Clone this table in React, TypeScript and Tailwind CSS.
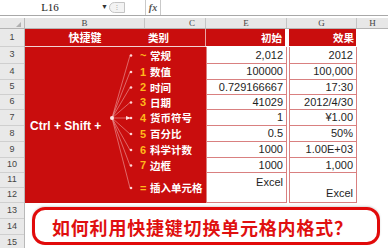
import React from "react";

const sans = "font-['Liberation_Sans','Noto_Sans_CJK_SC',sans-serif]";
const cjk = "font-['Noto_Sans_CJK_SC','Liberation_Sans',sans-serif]";

const rowHeads: [string, number][] = [
    ["1", 18], ["3", 17], ["4", 16], ["5", 15], ["6", 15], ["7", 16], ["8", 16],
    ["9", 16], ["10", 15], ["11", 15], ["12", 15], ["13", 16], ["14", 16], ["15", 16],
];

const items = [
    {k: "~", t: "常规", h: 17},
    {k: "1", t: "数值", h: 16},
    {k: "2", t: "时间", h: 15},
    {k: "3", t: "日期", h: 15},
    {k: "4", t: "货币符号", h: 16},
    {k: "5", t: "百分比", h: 16},
    {k: "6", t: "科学计数", h: 16},
    {k: "7", t: "边框", h: 15},
    {k: "=", t: "插入单元格", h: 30},
];

const rowH = ["h-[17px]", "h-[16px]", "h-[15px]", "h-[15px]", "h-[16px]", "h-[16px]", "h-[16px]", "h-[15px]", "h-[30px]"];

const before = ["2,012", "100000", "0.729166667", "41029", "1", "0.5", "1000", "1000"];
const after = ["2012", "100,000", "17:30", "2012/4/30", "¥1.00", "50%", "1.00E+03", "1,000"];

function Fan() {
    let y = 0;
    const ends = items.map((it) => {
        const c = y + it.h / 2;
        y += it.h;
        return c;
    });
    return (
        <svg className="absolute left-0 top-0 pointer-events-none" width="181" height="156" viewBox="0 0 181 156">
            {ends.map((c, i) => (
                <line key={i} x1="87" y1="71" x2={i === 4 ? 104 : 105} y2={c} stroke="#eea4a4" strokeWidth="0.6"/>
            ))}
            {ends.map((c, i) => (
                <circle key={"d" + i} cx="106" cy={c} r="1.3" fill="#ffd6d6"/>
            ))}
            <path d="M101 69 L106 71 L101 73 Z" fill="#ffe0e0"/>
            <circle cx="87" cy="71" r="2" fill="#ffe6e6"/>
        </svg>
    );
}

export default function App() {
    return (
        <div className={`w-[388px] h-[248px] overflow-hidden bg-white flex flex-col ${sans}`}>
            {/* formula bar */}
            <div className="h-[16px] flex items-stretch border-b border-[#a8a8a8] shrink-0">
                <div className="w-[100px] flex items-center justify-center text-[11px] text-[#222] font-['Liberation_Serif',serif]">L16</div>
                <div className="w-[9px] flex items-center justify-center text-[7px] text-[#333]">▼</div>
                <div className="w-[36px] flex items-center">
                    <div className="w-[16px] h-[11px] rounded-l-full border border-[#c4c4c4] bg-[#f3f3f3] flex items-center justify-center text-[7px] text-[#999] leading-none">⁝</div>
                </div>
                <div className="w-[16px] border-x border-[#c9c9c9] flex items-center justify-center text-[10px] italic font-bold text-[#555] font-['Liberation_Serif',serif]">fx</div>
                <div className="flex-1"/>
            </div>
            <div className="h-[2px] shrink-0"/>

            {/* column headers */}
            <div className="h-[11px] flex shrink-0 bg-[#e7e7e7] border-b border-[#b4b4b4] text-[9px] text-[#444] leading-none font-['Liberation_Serif',serif]">
                <div className="w-[25px] border-r border-[#b9b9b9] relative">
                    <div className="absolute right-[3px] bottom-[1px] w-0 h-0 border-l-[5px] border-l-transparent border-b-[5px] border-b-[#b0b0b0]"/>
                </div>
                <div className="w-[120px] border-r border-[#c4c4c4] flex items-center justify-center">B</div>
                <div className="w-[61px] border-r border-[#c4c4c4] flex items-center justify-end pr-[10px]">C</div>
                <div className="w-[81px] border-r border-[#c4c4c4] flex items-center justify-center">E</div>
                <div className="w-[70px] border-r border-[#c4c4c4] flex items-center justify-center">G</div>
                <div className="flex-1 flex items-center justify-center">H</div>
            </div>

            <div className="flex flex-1 min-h-0">
                {/* row headers */}
                <div className="w-[25px] shrink-0 flex flex-col bg-[#e9e9e9] border-r border-[#b9b9b9]">
                    {rowHeads.map(([n, h]) => (
                        <div key={n} style={{height: h}}
                             className="shrink-0 border-b border-[#cfcfcf] flex items-center justify-center text-[9px] text-[#444]">
                            {n}
                        </div>
                    ))}
                </div>

                <div className="flex-1 flex flex-col">
                    {/* row 1 */}
                    <div className={`h-[17px] flex shrink-0 text-white font-bold text-[11px] ${cjk}`}>
                        <div className="w-[180px] bg-[#c90d0d] flex items-center">
                            <div className="w-[120px] text-center">快捷键</div>
                            <div className="pl-[3px] text-[10.5px]">类别</div>
                        </div>
                        <div className="w-[1px] bg-[#e8a5a5]"/>
                        <div className="w-[79px] bg-[#c90d0d] flex items-center justify-end pr-[3px] text-[10.5px]">初始</div>
                        <div className="w-[4px]"/>
                        <div className="w-[67px] bg-[#c90d0d] flex items-center justify-end pr-[2px] text-[10.5px]">效果</div>
                    </div>
                    <div className="h-[1px] flex shrink-0">
                        <div className="w-[181px] bg-[#f2d2d2]"/>
                    </div>

                    {/* rows 3-12 */}
                    <div className="h-[156px] flex shrink-0">
                        <div className="w-[181px] bg-[#c90d0d] relative flex">
                            <Fan/>
                            <div className="w-[115px] flex items-center pl-[5px] pt-[1px]">
                                <span className="text-white font-bold text-[12px] whitespace-nowrap">Ctrl + Shift +</span>
                            </div>
                            <div className="flex flex-col">
                                {items.map((it, i) => (
                                    <div key={it.t} className={`${rowH[i]} flex items-center whitespace-nowrap`}>
                                        <span className="w-[10px] text-[#ffb81c] font-bold text-[11px]">{it.k}</span>
                                        <span className={`text-white font-bold text-[10.5px] ${cjk}`}>{it.t}</span>
                                    </div>
                                ))}
                            </div>
                        </div>

                        <div className="w-[81px] flex flex-col text-[11px] text-[#1e1e1e]">
                            {before.map((v, i) => (
                                <div key={i} className={`${rowH[i]} border-x border-b border-[#d98080] flex items-center justify-end pr-[3px]`}>
                                    {v}
                                </div>
                            ))}
                            <div className="h-[30px] border-x border-b border-[#d98080] flex items-start justify-end pr-[3px] pt-[1px]">
                                Excel
                            </div>
                        </div>
                        <div className="w-[2px]"/>
                        <div className="w-[68px] flex flex-col text-[11px] text-[#1e1e1e]">
                            {after.map((v, i) => (
                                <div key={i} className={`${rowH[i]} border-x border-b border-[#d98080] flex items-center justify-end pr-[3px]`}>
                                    {v}
                                </div>
                            ))}
                            <div className="h-[30px] border-x border-b border-[#d98080] flex items-end justify-end pr-[3px] pb-[1px]">
                                Excel
                            </div>
                        </div>
                    </div>

                    {/* rows 13-15 */}
                    <div className="flex-1 pt-[4px] pl-[7px]">
                        <div className="w-[348px] h-[38px] border-[3px] border-[#e10a0a] rounded-[13px] flex items-center pl-[17px] pt-[3px] shadow-[0_-1px_2px_rgba(0,0,0,0.15)]">
                            <span className={`text-[18px] font-bold text-[#e0100f] tracking-[0.8px] whitespace-nowrap ${cjk}`}>
                                如何利用快捷键切换单元格内格式？
                            </span>
                        </div>
                    </div>
                </div>
            </div>
        </div>
    );
}
